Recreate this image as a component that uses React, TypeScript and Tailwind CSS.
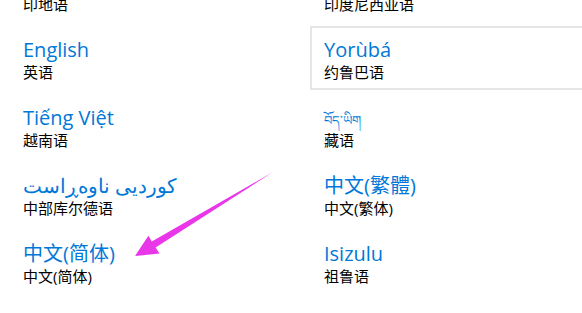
const languages = [
  { name: "", sub: "印地语", dir: "ltr" },
  { name: "", sub: "印度尼西亚语", dir: "ltr" },
  { name: "English", sub: "英语", dir: "ltr" },
  { name: "Yorùbá", sub: "约鲁巴语", dir: "ltr", selected: true },
  { name: "Tiếng Việt", sub: "越南语", dir: "ltr" },
  { name: "བོད་ཡིག", sub: "藏语", dir: "ltr", small: true },
  { name: "کوردیی ناوەڕاست", sub: "中部库尔德语", dir: "rtl" },
  { name: "中文(繁體)", sub: "中文(繁体)", dir: "ltr" },
  { name: "中文(简体)", sub: "中文(简体)", dir: "ltr" },
  { name: "Isizulu", sub: "祖鲁语", dir: "ltr" },
]

function Arrow() {
  return (
    <svg className="pointer-events-none absolute left-0 top-0" width="582" height="313" viewBox="0 0 582 313">
      <polygon
        points="273,172 155.6,247.6 159.5,253.6 135,256 148.4,235.8 151.8,241.6"
        fill="#e836e8"
      />
    </svg>
  )
}

export default function App() {
  return (
    <div
      className="relative h-[313px] w-[582px] overflow-hidden bg-white"
      style={{ fontFamily: '"Open Sans", "Noto Sans CJK SC", sans-serif' }}
    >
      <div className="ml-[9px] mt-[-42px] grid w-[640px] grid-cols-[297px_297px] gap-x-[4px] gap-y-[4px]">
        {languages.map((lang, i) => (
          <div
            key={i}
            className={
              "h-[64px] border-2 px-[12px] pt-[8px] " +
              (lang.selected ? "border-[#e5e5e5]" : "border-transparent")
            }
          >
            <div
              className={
                "h-[27px] whitespace-nowrap leading-[27px] text-[#0078d7] " +
                (lang.small ? "pt-[3px] text-[13px]" : "text-[20px]")
              }
            >
              {lang.name ? (
                <span dir={lang.dir} className="inline-block">
                  {lang.name}
                </span>
              ) : null}
            </div>
            <div className="whitespace-nowrap text-[15px] leading-[19px] text-black">{lang.sub}</div>
          </div>
        ))}
      </div>
      <Arrow />
    </div>
  )
}
